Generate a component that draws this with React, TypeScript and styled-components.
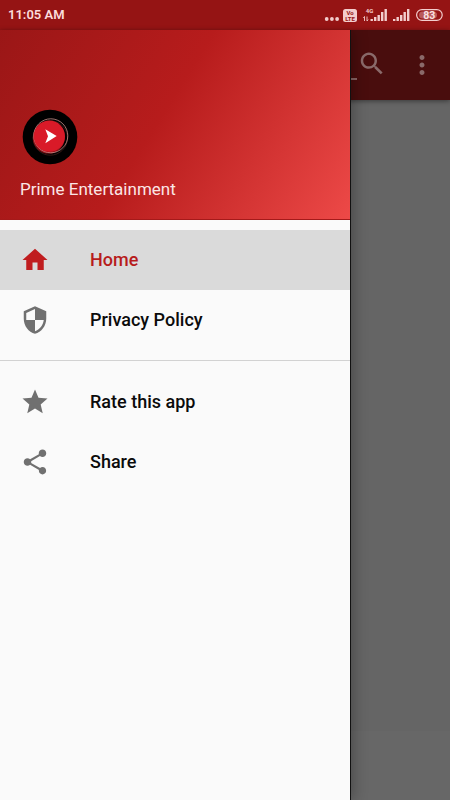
import React from "react";
import styled, { createGlobalStyle } from "styled-components";

const GlobalStyle = createGlobalStyle`
  * { box-sizing: border-box; }
  body {
    margin: 0;
    font-family: Roboto, "Liberation Sans", sans-serif;
    background: #656565;
  }
`;

const Screen = styled.div`
  min-height: 100vh;
  display: flex;
  flex-direction: column;
`;

const StatusBar = styled.header`
  height: 30px;
  padding: 0 7px 0 8px;
  display: flex;
  align-items: center;
  justify-content: space-between;
  background: #951414;
  color: #fbdcdc;
`;

const Clock = styled.time`
  font-size: 13px;
  line-height: 16px;
  font-weight: 600;
`;

const StatusIcons = styled.svg`
  display: block;
  width: 120px;
  height: 30px;
`;

const Stage = styled.div`
  flex: 1;
  display: grid;
  grid-template: 1fr / 1fr;
`;

const AppPage = styled.div`
  grid-area: 1 / 1;
  display: flex;
  flex-direction: column;
`;

const Toolbar = styled.div`
  height: 70px;
  padding: 0 13px 0 0;
  display: flex;
  align-items: center;
  justify-content: flex-end;
  gap: 20px;
  background: #490d0d;
  box-shadow: 0 1px 5px rgba(0, 0, 0, 0.45);
  z-index: 1;
`;

const SearchField = styled.input`
  flex: 1;
  min-width: 0;
  height: 30px;
  margin: 0 -20px 0 16px;
  padding: 0;
  border: 0;
  border-bottom: 2px solid #8a6565;
  border-radius: 0;
  outline: 0;
  background: transparent;
  color: #8a6565;
`;

const ToolButton = styled.button`
  width: 30px;
  height: 30px;
  padding: 0;
  border: 0;
  background: transparent;
  color: #8a6a6a;

  svg {
    display: block;
    width: 30px;
    height: 30px;
  }
`;

const PageContent = styled.main`
  flex: 1;
  background: #656565;
`;

const PageFooter = styled.footer`
  height: 69px;
  background: #676767;
`;

const Drawer = styled.aside`
  grid-area: 1 / 1;
  z-index: 2;
  width: calc(100% - 100px);
  display: flex;
  flex-direction: column;
  background: #fafafa;
  box-shadow: 1px 0 0 #111, 3px 0 14px rgba(0, 0, 0, 0.3);
  clip-path: inset(0 -30px 0 0);
`;

const DrawerHeader = styled.div`
  height: 190px;
  padding: 0 20px 18px;
  display: flex;
  flex-direction: column;
  justify-content: flex-end;
  gap: 10px;
  border-bottom: 1px solid #a51a1a;
  background: linear-gradient(122deg, #981616 -4%, #b71c1c 46%, #ef4b49 102%);
`;

const Logo = styled.svg`
  display: block;
  width: 60px;
  height: 60px;
`;

const AppName = styled.h1`
  margin: 0;
  font-size: 17px;
  line-height: 24px;
  font-weight: 400;
  color: #fbe6e6;
`;

const Menu = styled.nav`
  padding: 10px 0;
`;

const Group = styled.div`
  & + & {
    margin-top: 10px;
    padding-top: 11px;
    border-top: 1px solid #d2d2d2;
  }
`;

const MenuLink = styled.a<{ $active?: boolean }>`
  height: 60px;
  padding: 0 20px;
  display: flex;
  align-items: center;
  gap: 40px;
  font-size: 18px;
  line-height: 24px;
  font-weight: 500;
  text-decoration: none;
  color: ${(p) => (p.$active ? "#b71c1c" : "#0b0b0b")};
  background: ${(p) => (p.$active ? "#dadada" : "transparent")};

  svg {
    width: 30px;
    height: 30px;
    flex: none;
    color: ${(p) => (p.$active ? "#c01d1f" : "#707070")};
  }
`;

const paths = {
  home: "M10 20v-6h4v6h5v-8h3L12 3 2 12h3v8z",
  shield:
    "M12 1L3 5v6c0 5.55 3.84 10.74 9 12 5.16-1.26 9-6.45 9-12V5l-9-4zm0 10.99h7c-.53 4.12-3.28 7.79-7 8.94V12H5V6.3l7-3.11v8.8z",
  star: "M12 17.27L18.18 21l-1.64-7.03L22 9.24l-7.19-.61L12 2 9.19 8.63 2 9.24l5.46 4.73L5.82 21z",
  share:
    "M18 16.08c-.76 0-1.44.3-1.96.77L8.91 12.7c.05-.23.09-.46.09-.7s-.04-.47-.09-.7l7.05-4.11c.54.5 1.25.81 2.04.81 1.66 0 3-1.34 3-3s-1.34-3-3-3-3 1.34-3 3c0 .24.04.47.09.7L8.04 9.81C7.5 9.31 6.79 9 6 9c-1.66 0-3 1.34-3 3s1.34 3 3 3c.79 0 1.5-.31 2.04-.81l7.12 4.16c-.05.21-.08.43-.08.65 0 1.61 1.31 2.92 2.92 2.92 1.61 0 2.92-1.31 2.92-2.92s-1.31-2.92-2.92-2.92z",
  search:
    "M15.5 14h-.79l-.28-.27C15.41 12.59 16 11.11 16 9.5 16 5.91 13.09 3 9.5 3S3 5.91 3 9.5 5.91 16 9.5 16c1.61 0 3.09-.59 4.23-1.57l.27.28v.79l5 4.99L20.49 19l-4.99-5zm-6 0C7.01 14 5 11.99 5 9.5S7.01 5 9.5 5 14 7.01 14 9.5 11.99 14 9.5 14z",
  more: "M12 8c1.1 0 2-.9 2-2s-.9-2-2-2-2 .9-2 2 .9 2 2 2zm0 2c-1.1 0-2 .9-2 2s.9 2 2 2 2-.9 2-2-.9-2-2-2zm0 6c-1.1 0-2 .9-2 2s.9 2 2 2 2-.9 2-2-.9-2-2-2z",
};

const Icon = ({ name }: { name: keyof typeof paths }) => (
  <svg
    viewBox={name === "search" ? "0 1 24 24" : "0 0 24 24"}
    fill="currentColor"
    aria-hidden="true"
  >
    <path d={paths[name]} />
  </svg>
);

const SignalBars = ({ x }: { x: number }) => (
  <g fill="#f3cdcd">
    {[2, 4, 6, 9, 12].map((h, i) => (
      <rect key={h} x={x + i * 3.5} y={21 - h} width="2.4" height={h} />
    ))}
  </g>
);

const Indicators = () => (
  <StatusIcons viewBox="323 0 120 30" role="img" aria-label="Battery 83, two SIM signals, VoLTE">
    <g fill="#f3cdcd">
      <circle cx="326.7" cy="19" r="1.9" />
      <circle cx="331.9" cy="19" r="1.9" />
      <circle cx="337.1" cy="19" r="1.9" />
      <rect x="343" y="9" width="14" height="13" rx="2.5" />
    </g>
    <g fontFamily="Roboto, sans-serif" fontWeight="700" textAnchor="middle">
      <text x="350" y="15" fontSize="6" fill="#951414">Vo</text>
      <text x="350" y="21" fontSize="6" fill="#951414">LTE</text>
      <text x="369.5" y="13" fontSize="6" fill="#f3cdcd">4G</text>
    </g>
    <path d="M364.5 21v-4.5m-1.2 1.4l1.2-1.4M367 16.5V21m1.2-1.4L367 21" stroke="#f3cdcd" strokeWidth="0.9" fill="none" />
    <SignalBars x={370.5} />
    <SignalBars x={393} />
    <rect x="416.6" y="9.6" width="25.6" height="10.8" rx="5.4" fill="none" stroke="#f3cdcd" strokeWidth="1.2" />
    <rect x="419" y="11.5" width="18" height="7" rx="3.5" fill="#b95a5a" />
    <text x="429.2" y="19" fontFamily="Roboto, sans-serif" fontWeight="700" fontSize="10.5" textAnchor="middle" fill="#fbe2e2">83</text>
  </StatusIcons>
);

const PlayLogo = () => (
  <Logo viewBox="0 0 60 60" aria-hidden="true">
    <circle cx="30" cy="30" r="27.3" fill="#000" />
    <circle cx="30.3" cy="31" r="17.2" fill="none" stroke="#4a2420" strokeWidth="0.7" />
    <circle cx="28.8" cy="30.6" r="16" fill="#8f1219" />
    <circle cx="30.8" cy="28.8" r="17" fill="none" stroke="#c9908c" strokeWidth="0.8" />
    <circle cx="29.4" cy="29.2" r="15.6" fill="#d91a28" />
    <path d="M25.3 22.3L36.7 29L25.3 36.2L28 29.2Z" fill="#fff" />
  </Logo>
);

export default function App() {
  return (
    <>
      <GlobalStyle />
      <Screen>
        <StatusBar>
          <Clock>11:05 AM</Clock>
          <Indicators />
        </StatusBar>
        <Stage>
          <AppPage>
            <Toolbar>
              <SearchField type="search" aria-label="Search" />
              <ToolButton type="button" aria-label="Search">
                <Icon name="search" />
              </ToolButton>
              <ToolButton type="button" aria-label="More options">
                <Icon name="more" />
              </ToolButton>
            </Toolbar>
            <PageContent />
            <PageFooter />
          </AppPage>
          <Drawer>
            <DrawerHeader>
              <PlayLogo />
              <AppName>Prime Entertainment</AppName>
            </DrawerHeader>
            <Menu>
              <Group>
                <MenuLink href="#home" $active aria-current="page">
                  <Icon name="home" />
                  Home
                </MenuLink>
                <MenuLink href="#privacy">
                  <Icon name="shield" />
                  Privacy Policy
                </MenuLink>
              </Group>
              <Group>
                <MenuLink href="#rate">
                  <Icon name="star" />
                  Rate this app
                </MenuLink>
                <MenuLink href="#share">
                  <Icon name="share" />
                  Share
                </MenuLink>
              </Group>
            </Menu>
          </Drawer>
        </Stage>
      </Screen>
    </>
  );
}
